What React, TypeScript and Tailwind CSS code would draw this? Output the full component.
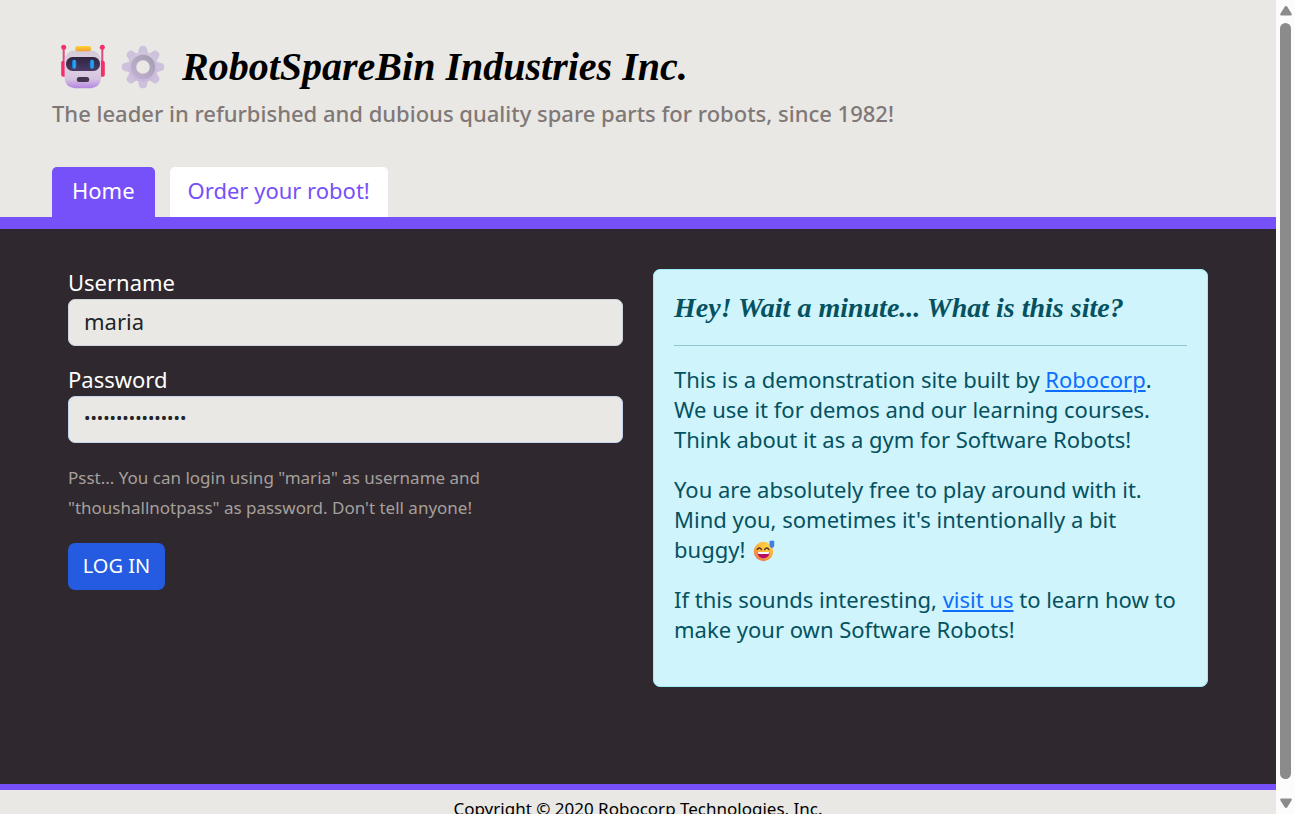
import type { ReactNode } from 'react';

function RobotIcon() {
  return (
    <svg viewBox="0 0 46 46" className="h-[46px] w-[46px]" aria-hidden="true">
      <defs>
        <linearGradient id="robotFace" x1="0" y1="0" x2="0" y2="1">
          <stop offset="0" stopColor="#d3c8d8" />
          <stop offset="0.35" stopColor="#dfd4e3" />
          <stop offset="0.75" stopColor="#d6c4df" />
          <stop offset="1" stopColor="#b485e2" />
        </linearGradient>
        <linearGradient id="robotHat" x1="0" y1="0" x2="0" y2="1">
          <stop offset="0" stopColor="#ffd23c" />
          <stop offset="1" stopColor="#f0a02a" />
        </linearGradient>
        <linearGradient id="robotVisor" x1="0" y1="0" x2="0" y2="1">
          <stop offset="0" stopColor="#2f2440" />
          <stop offset="1" stopColor="#4b3a66" />
        </linearGradient>
        <linearGradient id="robotEye" x1="0" y1="0" x2="1" y2="0">
          <stop offset="0" stopColor="#0f7fd0" />
          <stop offset="0.6" stopColor="#2fa8f5" />
          <stop offset="1" stopColor="#1577bd" />
        </linearGradient>
      </defs>
      <rect x="2.7" y="5" width="2" height="14" fill="#dd4a80" />
      <rect x="41.3" y="5" width="2" height="14" fill="#dd4a80" />
      <circle cx="3.7" cy="3.3" r="2.5" fill="#f5306c" />
      <circle cx="42.3" cy="3.3" r="2.5" fill="#f5306c" />
      <rect x="1.2" y="16.8" width="6" height="16" rx="2" fill="#f62d66" />
      <rect x="38.8" y="16.8" width="6" height="16" rx="2" fill="#f62d66" />
      <rect x="4.6" y="6.5" width="36.4" height="37.8" rx="10" fill="url(#robotFace)" />
      <rect x="15.2" y="2" width="16" height="5.2" rx="2.4" fill="url(#robotHat)" />
      <rect x="6" y="13" width="34" height="14" rx="6.5" fill="url(#robotVisor)" />
      <rect x="12" y="15.7" width="4.4" height="9" rx="2.2" fill="url(#robotEye)" />
      <rect x="29.8" y="15.7" width="4.4" height="9" rx="2.2" fill="url(#robotEye)" />
      <rect x="16.8" y="33" width="12.4" height="5" rx="2.5" fill="#43344f" />
    </svg>
  );
}

function GearIcon() {
  const angles = [0, 45, 90, 135, 180, 225, 270, 315];
  return (
    <svg viewBox="0 0 46 46" className="h-[46px] w-[46px]" aria-hidden="true">
      <defs>
        <linearGradient id="gearBody" gradientUnits="userSpaceOnUse" x1="23" y1="2" x2="23" y2="44">
          <stop offset="0" stopColor="#d0cadb" />
          <stop offset="1" stopColor="#c8b3e0" />
        </linearGradient>
        <linearGradient id="gearRing" x1="1" y1="0" x2="0" y2="1">
          <stop offset="0" stopColor="#a79eb2" />
          <stop offset="1" stopColor="#bfb0cf" />
        </linearGradient>
      </defs>
      <g fill="#cdc1dc">
        {angles.map((angle) => (
          <path
            key={angle}
            d="M16.5 11.5 Q18.4 9.5 18.8 5.6 Q19.2 1.7 23 1.7 Q26.8 1.7 27.2 5.6 Q27.6 9.5 29.5 11.5 Z"
            transform={`rotate(${angle} 23 23)`}
          />
        ))}
      </g>
      <circle cx="23" cy="23" r="15" fill="url(#gearBody)" />
      <circle cx="23" cy="23" r="9.5" fill="#e9e8e4" stroke="url(#gearRing)" strokeWidth="5.4" />
    </svg>
  );
}

function SweatSmileIcon() {
  return (
    <svg viewBox="0 0 22 22" className="ml-0.5 inline-block h-[22px] w-[22px] align-[-4px]" role="img" aria-label="Grinning face with sweat">
      <defs>
        <radialGradient id="smileFace" cx="0.65" cy="0.25" r="0.85">
          <stop offset="0" stopColor="#ffd545" />
          <stop offset="0.55" stopColor="#fdb13a" />
          <stop offset="1" stopColor="#ee6b4e" />
        </radialGradient>
      </defs>
      <circle cx="10.5" cy="11.5" r="9.7" fill="url(#smileFace)" />
      <path d="M4.2 9.6 Q6.3 6.4 8.6 9.6 M11.6 9.6 Q13.8 6.4 16 9.6" fill="none" stroke="#4a2b2e" strokeWidth="1.3" strokeLinecap="round" />
      <path d="M4.5 12 H16.5 C16.8 15.8 14 18.3 10.5 18.3 S4.2 15.8 4.5 12 Z" fill="#b80f62" />
      <path d="M4.7 12 H16.3 Q16.4 14 15.2 14 H5.8 Q4.6 14 4.7 12 Z" fill="#fff" />
      <path d="M16.6 1.6 Q16.6 0.8 17.4 0.8 H20.4 Q21.2 0.8 21.2 1.6 V5.6 A2.3 2.3 0 0 1 16.6 5.6 Z" fill="#3f7fe6" />
    </svg>
  );
}

function Scrollbar() {
  return (
    <div className="flex w-[19px] shrink-0 flex-col items-center justify-between bg-[#fcfcfc] py-[5px]" aria-hidden="true">
      <svg viewBox="0 0 12 11" className="h-[11px] w-3">
        <path d="M6 1 Q6.8 1 7.3 1.8 L11.5 8.4 Q12.4 10.3 10.6 10.4 H1.4 Q-0.4 10.3 0.5 8.4 L4.7 1.8 Q5.2 1 6 1 Z" fill="#8b8b8b" />
      </svg>
      <div className="mt-[7px] mb-[19px] w-[11px] flex-1 rounded-full bg-[#8b8b8b]" />
      <svg viewBox="0 0 12 11" className="h-[11px] w-3">
        <path d="M6 10 Q5.2 10 4.7 9.2 L0.5 2.6 Q-0.4 0.7 1.4 0.6 H10.6 Q12.4 0.7 11.5 2.6 L7.3 9.2 Q6.8 10 6 10 Z" fill="#8b8b8b" />
      </svg>
    </div>
  );
}

function TextLink({ children }: { children: ReactNode }) {
  return (
    <a href="#robocorp" className="text-[#0d6efd] underline">
      {children}
    </a>
  );
}

function Header() {
  return (
    <header className="border-b-12 border-[#7650f9] px-[52px] pt-11">
      <h1 className="flex h-[46px] items-center whitespace-nowrap pl-2 font-['Liberation_Serif',serif] text-[40px] font-bold italic text-black">
        <RobotIcon />
        <span className="ml-3.5">
          <GearIcon />
        </span>
        <span className="ml-4">RobotSpareBin Industries Inc.</span>
      </h1>
      <p className="mt-2 font-medium text-[#807876]">
        The leader in refurbished and dubious quality spare parts for robots, since 1982!
      </p>
      <nav className="mt-[39px] flex gap-[15px]">
        <a href="#home" className="rounded-t-[5px] bg-[#7650f9] px-5 pt-2 pb-3 text-center text-white">
          Home
        </a>
        <a href="#order" className="rounded-t-[5px] bg-white px-[18px] pt-2 pb-3 text-center text-[#7650f9]">
          Order your robot!
        </a>
      </nav>
    </header>
  );
}

function LoginForm() {
  return (
    <form onSubmit={(event) => event.preventDefault()}>
      <label htmlFor="username" className="block pb-1 leading-[26px] text-white">
        Username
      </label>
      <input
        id="username"
        type="text"
        defaultValue="maria"
        className="block h-[47px] w-full rounded-[7px] border border-[#ced4da] bg-[#e9e8e4] px-[15px] pb-1 text-[#212529]"
      />
      <label htmlFor="password" className="mt-5 block pb-1 leading-[26px] text-white">
        Password
      </label>
      <input
        id="password"
        type="password"
        defaultValue="thoushallnotpass"
        className="block h-[47px] w-full rounded-[7px] border border-[#c4d3ef] bg-[#e9e8e4] px-[15px] pb-1 text-[17px] text-[#212529]"
      />
      <p className="mt-5 text-[17px] text-[#a5a09c]">
        Psst... You can login using "maria" as username and
        <br />
        "thoushallnotpass" as password. Don't tell anyone!
      </p>
      <button type="submit" className="mt-5 h-[47px] w-[97px] rounded-[7px] bg-[#255be0] pb-0.5 text-[20px] text-white">
        LOG IN
      </button>
    </form>
  );
}

function AboutPanel() {
  return (
    <section className="whitespace-nowrap rounded-[7px] border border-[#9eeaf9] bg-[#cff4fc] px-5 pt-5 pb-[42px] text-[#055160]">
      <h2 className="mb-[18px] border-b border-[#90c6cf] pb-5 font-['Liberation_Serif',serif] text-[28px] font-bold italic leading-[35px]">
        Hey! Wait a minute... What is this site?
      </h2>
      <p>
        This is a demonstration site built by <TextLink>Robocorp</TextLink>.<br />
        We use it for demos and our learning courses.
        <br />
        Think about it as a gym for Software Robots!
      </p>
      <p className="mt-5">
        You are absolutely free to play around with it.
        <br />
        Mind you, sometimes it's intentionally a bit
        <br />
        buggy! <SweatSmileIcon />
      </p>
      <p className="mt-5">
        If this sounds interesting, <TextLink>visit us</TextLink> to learn how to
        <br />
        make your own Software Robots!
      </p>
    </section>
  );
}

export default function App() {
  return (
    <div className="flex h-screen overflow-hidden bg-[#e9e8e4] font-['Noto_Sans',sans-serif] text-[22px] leading-[30px]">
      <div className="min-w-0 flex-1 overflow-hidden">
        <Header />
        <main className="grid min-h-[561px] grid-cols-2 items-start gap-[30px] border-b-6 border-[#7650f9] bg-[#2f282e] px-[68px] pt-10">
          <LoginForm />
          <AboutPanel />
        </main>
        <footer className="py-1 text-center text-[17px] text-black">Copyright © 2020 Robocorp Technologies, Inc.</footer>
      </div>
      <Scrollbar />
    </div>
  );
}
